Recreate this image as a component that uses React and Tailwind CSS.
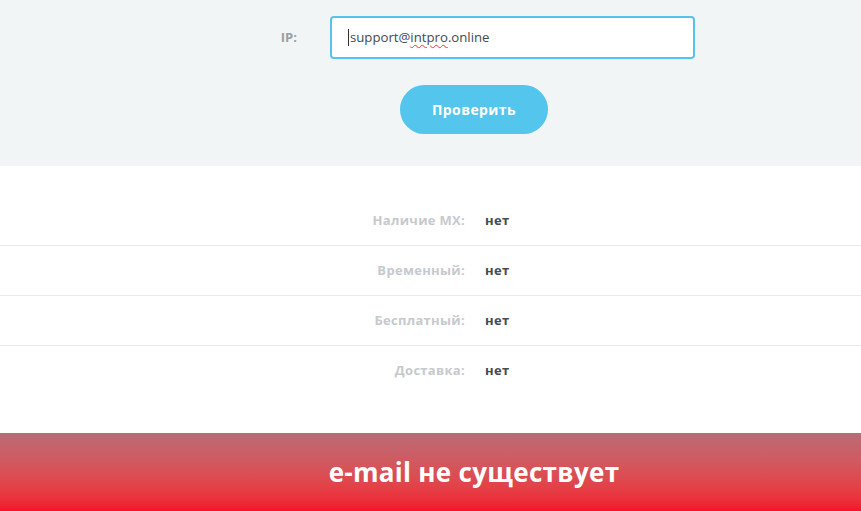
export default function App() {
  const rows = [
    ["Наличие MX:", "нет"],
    ["Временный:", "нет"],
    ["Бесплатный:", "нет"],
    ["Доставка:", "нет"],
  ];
  const font = { fontFamily: '"Open Sans", "Noto Sans", sans-serif' };
  return (
    <div className="w-[861px] h-[511px] overflow-hidden bg-white" style={font}>
      <div className="bg-[#f2f5f6] pt-[16px] pb-[32px]">
        <div className="flex items-center">
          <div className="w-[330px] pr-[33px] text-right text-[13px] font-bold text-[#9a9ea3]">IP:</div>
          <div className="w-[365px] h-[43px] border-2 border-[#56c3ea] rounded-[4px] bg-white flex items-center pl-[16px] text-[13.2px] text-[#3f4a54]">
            <span className="w-px h-[17px] bg-[#333] mr-[1px]"></span>
            <span>
              support@<span className="underline decoration-wavy decoration-red-500 decoration-1 underline-offset-2">intpro</span>.online
            </span>
          </div>
        </div>
        <div className="mt-[26px] ml-[400px] w-[148px] h-[49px] rounded-full bg-[#54c5ec] flex items-center justify-center text-white font-bold text-[14px] tracking-[0.4px]">
          Проверить
        </div>
      </div>
      <div className="pt-[30px] pb-[37px]">
        {rows.map(([k, v], i) => (
          <div
            key={k}
            className={`grid grid-cols-[475px_1fr] items-center h-[50px] ${i < rows.length - 1 ? "border-b border-[#e8e9ea]" : ""}`}
          >
            <div className="text-right pr-[10px] text-[13px] font-bold tracking-[0.3px] text-[#c6c9cd]">{k}</div>
            <div className="pl-[10px] text-[13px] font-bold tracking-[0.3px] text-[#464b52]">{v}</div>
          </div>
        ))}
      </div>
      <div className="h-[78px] bg-gradient-to-b from-[#bb6b77] to-[#f3122a] flex items-center justify-center pl-[87px] text-white font-bold text-[26px] tracking-[0.3px]">
        e-mail не существует
      </div>
    </div>
  );
}
